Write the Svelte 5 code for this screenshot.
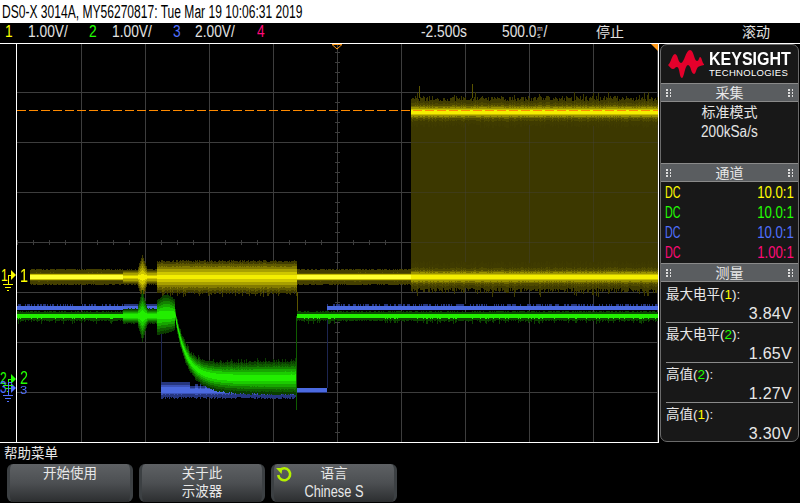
<script lang="ts">
  import { onMount } from "svelte";

  const W = 641;
  const H = 398;
  // plot canvas starts at x=17, y=44 in page coords
  const X0 = 17;
  const Y0 = 44;

  let plot: HTMLCanvasElement;

  let seed = 12345;
  function rnd() {
    seed = (seed * 1664525 + 1013904223) >>> 0;
    return seed / 4294967296;
  }

  type Shade = [number, string];

  // draws a column of nested bands around a center, widest band first.
  // noise only really moves the outer bands so the core stays smooth
  function column(
    ctx: CanvasRenderingContext2D,
    x: number,
    cy: number,
    up: number,
    down: number,
    shades: Shade[],
    noiseUp = 0,
    noiseDown = 0
  ) {
    for (const [k, color] of shades) {
      ctx.fillStyle = color;
      const t = Math.round(cy - up * k - noiseUp * k * k * k);
      const b = Math.round(cy + down * k + noiseDown * k * k * k);
      ctx.fillRect(x - X0, t - Y0, 1, Math.max(1, b - t));
    }
  }

  const yellow: Shade[] = [
    [1, "#3f3b00"],
    [0.84, "#5f5900"],
    [0.68, "#827a00"],
    [0.5, "#a8a000"],
    [0.34, "#cfc600"],
    [0.16, "#f4ee00"],
  ];
  const yellowBurst: Shade[] = [
    [1, "#3f3b00"],
    [0.72, "#4f4a00"],
    [0.54, "#716a00"],
    [0.4, "#9a9200"],
    [0.28, "#c8c000"],
    [0.14, "#f4ee00"],
  ];
  const yellowThin: Shade[] = [
    [1, "#443f00"],
    [0.6, "#5a5400"],
    [0.38, "#c4bb00"],
    [0.28, "#ffff30"],
  ];
  const green: Shade[] = [
    [1, "#0b3d00"],
    [0.85, "#0f5c00"],
    [0.7, "#138000"],
    [0.55, "#17a600"],
    [0.4, "#1bcc00"],
    [0.22, "#22ee00"],
  ];
  const greenThin: Shade[] = [
    [1, "#0c4400"],
    [0.55, "#22f000"],
  ];
  const blue: Shade[] = [
    [1, "#26367f"],
    [0.6, "#3c53b8"],
    [0.36, "#4b6ae0"],
  ];

  function drawGrid(ctx: CanvasRenderingContext2D) {
    ctx.fillStyle = "#3d3d3d";
    for (let x = 81; x < 658; x += 64) ctx.fillRect(x - X0, 0, 1, H);
    for (let y = 92; y < 442; y += 50) ctx.fillRect(0, y - Y0, W, 1);
    // center ticks
    for (let y = 52; y < 442; y += 10) ctx.fillRect(337 - X0 - 2, y - Y0, 5, 1);
    for (let x = 17; x < 658; x += 16) ctx.fillRect(x - X0, 240 - Y0, 1, 5);
  }

  function drawYellow(ctx: CanvasRenderingContext2D) {
    // dim fill between the two edges of the burst
    ctx.fillStyle = "#3c3800";
    ctx.fillRect(411 - X0, 112 - Y0, 247, 165);
    ctx.fillStyle = "rgba(70, 70, 70, 0.35)";
    for (let x = 465; x < 658; x += 64) ctx.fillRect(x - X0, 122 - Y0, 1, 150);
    for (let y = 142; y < 262; y += 50) ctx.fillRect(411 - X0, y - Y0, 247, 1);

    for (let x = 30; x < 658; x++) {
      const n = rnd();
      const m = rnd();
      if (x < 123 || (x >= 297 && x < 411)) {
        column(ctx, x, 277, 7, 7, yellowThin, n * 1.5, m * 1.5);
      } else if (x < 157) {
        const d = Math.abs(x - 142);
        const extra = x > 137 && x < 148 ? Math.max(0, 14 - d * 2.8) : 0;
        column(ctx, x, 277, 7 + extra, 7 + extra * 1.1, yellow, n, m);
      } else if (x < 297) {
        const sp = rnd() > 0.85 ? 3 : 0;
        column(ctx, x, 277, 15, 15, yellow, n * 2, m * 2 + sp);
      } else {
        const sp = rnd() > 0.9 ? 4 : 0;
        // two edges of the burst share the same shading
        column(ctx, x, 112, 11, 11, yellowBurst, n * 5 + sp, m * 5);
        column(ctx, x, 277, 11, 11, yellowBurst, n * 5, m * 5 + sp);
      }
    }
    // sparse glitch lines above the burst
    ctx.fillStyle = "#5a5400";
    ctx.fillRect(419 - X0, 86 - Y0, 1, 12);
    ctx.fillRect(472 - X0, 84 - Y0, 1, 14);
    ctx.fillRect(297 - X0, 292 - Y0, 1, 24);
  }

  function blueHigh(ctx: CanvasRenderingContext2D, x: number, n: number) {
    ctx.fillStyle = n > 0.55 ? "#26367f" : "#000";
    ctx.fillRect(x - X0, 304 - Y0, 1, 2);
    ctx.fillStyle = "#4b6ae0";
    ctx.fillRect(x - X0, 306 - Y0, 1, 4);
  }

  function drawBlue(ctx: CanvasRenderingContext2D) {
    ctx.fillStyle = "#1c2550";
    ctx.fillRect(161 - X0, 310 - Y0, 1, 76);
    ctx.fillRect(327 - X0, 310 - Y0, 1, 78);

    for (let x = 17; x < 658; x++) {
      const n = rnd();
      if (x < 157) {
        blueHigh(ctx, x, x > 123 ? 1 : n);
      } else if (x >= 161 && x < 297) {
        const up = x < 190 ? 8 : 4 + (n > 0.6 ? 2 : 0);
        column(ctx, x, 390, up, 7, blue, 0, n * 2);
      } else if (x >= 297 && x < 327) {
        ctx.fillStyle = "#4b6ae0";
        ctx.fillRect(x - X0, 388 - Y0, 1, 4);
        ctx.fillStyle = "#26367f";
        ctx.fillRect(x - X0, 392 - Y0, 1, 1);
      } else if (x >= 327) {
        blueHigh(ctx, x, n);
      }
    }
  }

  function drawGreen(ctx: CanvasRenderingContext2D) {
    for (let x = 17; x < 658; x++) {
      const n = rnd();
      const m = rnd();
      if (x < 123 || x >= 297) {
        column(ctx, x, 316, 4, 4, greenThin, n, m * (rnd() > 0.7 ? 4 : 1.5));
      } else if (x < 157) {
        const d = Math.abs(x - 142);
        const extra = x > 137 && x < 148 ? Math.max(0, 18 - d * 3.4) : 0;
        column(ctx, x, 316, 7 + extra, 7 + extra, green, n, m);
      } else if (x < 175) {
        const up = 14 + 6 * Math.sin(((x - 157) / 18) * Math.PI);
        const down = 15 + 5 * (1 - (x - 157) / 18);
        column(ctx, x, 315, up, down, green, n, m);
      } else {
        // exponential fall towards the low level with growing noise
        const t = x - 175;
        const cy = 378 - 62 * Math.exp(-t / 11);
        const spread = 5 + 11 * (1 - Math.exp(-t / 30));
        const sp = rnd() > 0.8 ? 2.5 : 0;
        column(ctx, x, cy, spread, spread, green, n * 2 + sp, m * 2);
      }
    }
    ctx.fillStyle = "#0f5c00";
    ctx.fillRect(296 - X0, 316 - Y0, 1, 94);
  }

  function drawMarker(ctx: CanvasRenderingContext2D) {
    ctx.fillStyle = "#ff8a00";
    for (let x = 0; x < W; x += 12) ctx.fillRect(x, 110 - Y0, 9, 1);
  }

  onMount(() => {
    const ctx = plot.getContext("2d");
    if (!ctx) return;
    ctx.fillStyle = "#000";
    ctx.fillRect(0, 0, W, H);
    drawGrid(ctx);
    drawYellow(ctx);
    drawBlue(ctx);
    drawGreen(ctx);
    drawMarker(ctx);
  });

  const channels = [
    { coupling: "DC", probe: "10.0:1", color: "#ffff00" },
    { coupling: "DC", probe: "10.0:1", color: "#22ff00" },
    { coupling: "DC", probe: "10.0:1", color: "#5070ff" },
    { coupling: "DC", probe: "1.00:1", color: "#ff0a78" },
  ];

  const measures = [
    { name: "最大电平", ch: "1", color: "#ffff00", value: "3.84V" },
    { name: "最大电平", ch: "2", color: "#22ff00", value: "1.65V" },
    { name: "高值", ch: "2", color: "#22ff00", value: "1.27V" },
    { name: "高值", ch: "1", color: "#ffff00", value: "3.30V" },
  ];
</script>

{#snippet head(title: string)}
  <div class="head">
    <i class="grip"></i>
    <span>{title}</span>
    <i class="grip"></i>
  </div>
{/snippet}

{#snippet ground(color: string, stem: number)}
  <svg class="gnd" viewBox="0 0 12 12" width="12" height="12" fill="none" stroke={color} stroke-width="1" shape-rendering="crispEdges">
    <path d="M6 {-stem}h4M6 {-stem}V6M1 6.5h10M3 9.5h6M5 12.5h2" />
  </svg>
{/snippet}

<div class="scope">
  <div class="title"><span>DS0-X 3014A, MY56270817: Tue Mar 19 10:06:31 2019</span></div>

  <div class="channels">
    <span class="c1">1</span><span>1.00V/</span>
    <span class="c2">2</span><span>1.00V/</span>
    <span class="c3">3</span><span>2.00V/</span>
    <span class="c4">4</span>
    <span>-2.500s</span>
    <span class="base">500.0<small><b>m</b><b>s</b></small>/</span>
    <span class="cjk">停止</span>
    <span class="cjk">滚动</span>
  </div>

  <div class="main">
    <div class="gutter">
      <span class="gut g1 c1">1</span>
      <span class="gut g2 c2">2</span>
      <span class="gut g3 c3">3</span>
      <i class="arrow a1"></i>
      <i class="arrow a2"></i>
      <i class="arrow a3"></i>
      <div class="gmark m1">{@render ground("#ffff00", 3)}</div>
      <div class="gmark m2">{@render ground("#22ff00", 0)}</div>
      <div class="gmark m3">{@render ground("#5070ff", 7)}</div>
    </div>

    <div class="plot">
      <canvas bind:this={plot} width={W} height={H}></canvas>
      <span class="lab l1 c1">1</span>
      <span class="lab l2 c2">2</span>
      <span class="lab l3 c3">3</span>
      <svg class="trig" viewBox="0 0 12 6" width="12" height="6">
        <path d="M1 0.5h10L6 5z" fill="none" stroke="#ff9a1a" />
      </svg>
      <i class="corner"></i>
    </div>

    <aside class="panel">
      <div class="logo">
        <svg viewBox="0 0 36 28" width="36" height="28">
          <path
            fill="#e4002b"
            d="M0 15C3 13 4 4 7 4C10 4 10 13 13 13C16 13 18 0 22 0C26 0 26 11 29 11C31 11 31 7 32 7C34 7 34 13 36 14V15C33 16 31 16 30 17C28 19 28 24 26 24C23 24 23 15 20 15C17 15 16 28 14 28C11 28 12 17 9 17C7 17 7 19 5 19C3 19 2 17 0 15Z"
          />
        </svg>
        <div class="brand">
          <b>KEYSIGHT</b>
          <span>TECHNOLOGIES</span>
        </div>
      </div>

      {@render head("采集")}
      <div class="acq">
        <div class="mode">标准模式</div>
        <div class="rate"><span>200kSa/s</span></div>
      </div>

      {@render head("通道")}
      <div class="chans">
        {#each channels as c}
          <div class="chan" style:color={c.color}>
            <span class="dc">{c.coupling}</span><span class="probe">{c.probe}</span>
          </div>
        {/each}
      </div>

      {@render head("测量")}
      <div class="meas">
        {#each measures as m}
          <div class="mrow">
            <div class="mname">{m.name}(<span style:color={m.color}>{m.ch}</span>):</div>
            <div class="mval">{m.value}</div>
          </div>
        {/each}
      </div>
    </aside>
  </div>

  <div class="help">帮助菜单</div>

  <div class="keys">
    <div class="key">开始使用</div>
    <div class="key"><div>关于此</div><div>示波器</div></div>
    <div class="key">
      <svg class="spin" viewBox="0 0 18 18" width="18" height="18" fill="none">
        <path d="M4.5 5.5A6 6 0 1 1 3.2 10" stroke="#b4f000" stroke-width="2.6" />
        <path d="M1 3l6.5 0-1 6z" fill="#b4f000" />
      </svg>
      <div>语言</div>
      <div class="lang"><span>Chinese S</span></div>
    </div>
  </div>
</div>

<style>
  :global(body) {
    margin: 0;
    background: #000;
  }

  .scope {
    width: 800px;
    height: 503px;
    overflow: hidden;
    background: #000;
    color: #e2e2e2;
    font-family: "Liberation Sans", "Noto Sans CJK SC", sans-serif;
  }

  .title {
    height: 23px;
    line-height: 24px;
    padding-left: 2px;
    background: #fff;
    color: #000;
    font-size: 18px;
    white-space: nowrap;
    overflow: hidden;
  }
  .title span {
    display: inline-block;
    transform: scaleX(0.67);
    transform-origin: left;
  }

  .channels {
    height: 20px;
    display: grid;
    grid-template-columns: 23px 61px 23px 61px 22px 62px 164px 81px 94px 146px 1fr;
    align-items: start;
    padding-left: 5px;
    font-size: 17px;
    line-height: 18px;
    white-space: nowrap;
  }
  .channels span {
    transform: scaleX(0.81);
    transform-origin: left;
  }
  .channels .cjk {
    font-size: 14px;
    transform: none;
  }
  .base {
    display: inline-flex;
    align-items: center;
  }
  .base small {
    display: inline-flex;
    flex-direction: column;
    font-size: 8px;
    line-height: 7px;
    margin: 0 1px;
  }
  .base b {
    font-weight: normal;
  }
  .c1 { color: #ffff00; }
  .c2 { color: #22ff00; }
  .c3 { color: #5070ff; }
  .c4 { color: #ff0a78; }

  .main {
    display: flex;
    height: 399px;
    border-top: 1px solid #fff;
  }

  .gutter {
    position: relative;
    width: 16px;
    flex: none;
    height: 398px;
    border-bottom: 1px solid #fff;
  }

  .gut {
    position: absolute;
    left: 1px;
    font-size: 16px;
    line-height: 14px;
    transform: scaleX(0.75);
    transform-origin: left;
  }
  .g1 { top: 225px; }
  .g2 { top: 328px; left: 0; }
  .g3 { top: 337px; left: 0; }

  .arrow {
    position: absolute;
    left: 11px;
    border-left: 5px solid;
    border-top: 5px solid transparent;
    border-bottom: 5px solid transparent;
  }
  .a1 { top: 226px; color: #ffff00; }
  .a2 { top: 330px; color: #22ff00; }
  .a3 { top: 339px; color: #5070ff; }

  .gmark {
    position: absolute;
    left: 2px;
    width: 12px;
    height: 12px;
  }
  .m1 { top: 234px; }
  .m2 { top: 335px; }
  .m3 { top: 345px; }
  .gnd {
    display: block;
    overflow: visible;
  }

  .plot {
    position: relative;
    flex: none;
    width: 641px;
    height: 398px;
    border-left: 1px solid #fff;
    border-right: 1px solid #fff;
    border-bottom: 1px solid #fff;
  }
  .plot canvas {
    display: block;
  }
  .lab {
    position: absolute;
    left: 3px;
    font-size: 18px;
    line-height: 16px;
    transform: scaleX(0.8);
    transform-origin: left;
  }
  .l1 { top: 224px; }
  .l2 { top: 326px; }
  .l3 {
    top: 343px;
    font-size: 10px;
    line-height: 7px;
    transform: scaleX(1.3);
  }

  .trig {
    position: absolute;
    left: 314px;
    top: 0;
  }
  .corner {
    position: absolute;
    right: 0;
    top: 0;
    border-top: 7px solid #ff9a1a;
    border-left: 7px solid transparent;
  }

  .panel {
    flex: none;
    width: 137px;
    height: 396px;
    margin-left: 1px;
    border: 1px solid #6a6a6a;
    border-radius: 7px;
    background: #181818;
    overflow: hidden;
    font-size: 14px;
  }

  .logo {
    height: 38px;
    display: flex;
    align-items: center;
    gap: 5px;
    padding-left: 7px;
  }
  .logo svg {
    flex: none;
  }
  .brand {
    display: flex;
    flex-direction: column;
    min-width: 0;
    color: #fff;
    white-space: nowrap;
  }
  .brand b {
    font-size: 18px;
    line-height: 17px;
    transform: scaleX(0.89);
    transform-origin: left;
  }
  .brand span {
    font-size: 9.5px;
    line-height: 10px;
    letter-spacing: 0.3px;
  }

  .head {
    height: 16px;
    padding: 1px 5px 0;
    display: flex;
    align-items: center;
    justify-content: space-between;
    background: #5a5d60;
    border-top: 1px solid #8a8a8a;
    border-bottom: 1px solid #8a8a8a;
    color: #e8e8e8;
    font-size: 14px;
    line-height: 17px;
  }
  .grip {
    width: 5px;
    height: 8px;
    background-image: radial-gradient(circle at 1px 1px, #ddd 1px, transparent 1px);
    background-size: 4px 3px;
  }

  .acq {
    height: 60px;
    padding-top: 1px;
    text-align: center;
    line-height: 19px;
    color: #e4e4e4;
  }
  .mode {
    font-size: 14px;
  }
  .rate {
    font-size: 16px;
  }
  .rate span {
    display: inline-block;
    transform: scaleX(0.85);
  }

  .chans {
    height: 81px;
    padding: 0 4px;
  }
  .chan {
    display: flex;
    justify-content: space-between;
    height: 20px;
    line-height: 20px;
    font-size: 16.5px;
  }
  .dc {
    transform: scaleX(0.65);
    transform-origin: left;
  }
  .probe {
    transform: scaleX(0.8);
    transform-origin: right;
  }

  .meas {
    padding-top: 1px;
  }
  .mrow {
    height: 37px;
    margin: 0 5px;
    padding-top: 2px;
    border-bottom: 1px solid #8a8a8a;
    line-height: 19px;
    color: #e8e8e8;
  }
  .mrow:last-child {
    border-bottom: none;
  }
  .mname {
    font-size: 13.5px;
  }
  .mval {
    text-align: right;
    font-size: 16px;
    letter-spacing: 0.3px;
    padding-right: 1px;
  }

  .help {
    height: 21px;
    padding-left: 4px;
    font-size: 13.5px;
    line-height: 21px;
    color: #e8e8e8;
  }

  .keys {
    display: flex;
    gap: 6px;
    padding-left: 7px;
  }
  .key {
    position: relative;
    width: 126px;
    height: 38px;
    box-sizing: border-box;
    padding-top: 1px;
    border-left: 3px solid #3c4043;
    border-right: 3px solid #3c4043;
    border-radius: 6px;
    background: linear-gradient(#5e6164, #4c4f52 50%, #2c2e30);
    text-align: center;
    font-size: 13.5px;
    line-height: 18px;
    color: #e8e8e8;
  }
  .lang {
    font-size: 16px;
  }
  .lang span {
    display: inline-block;
    transform: scaleX(0.8);
  }
  .spin {
    position: absolute;
    left: 1px;
    top: 1px;
  }
</style>
